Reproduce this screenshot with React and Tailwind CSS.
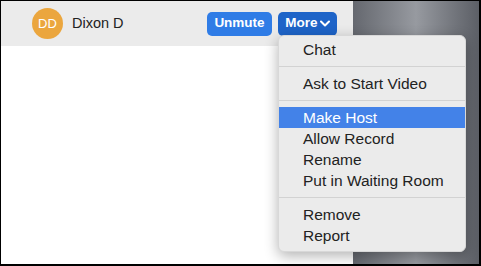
import React from 'react'

const items = [
  ['Chat'],
  ['Ask to Start Video'],
  ['Make Host', 'Allow Record', 'Rename', 'Put in Waiting Room'],
  ['Remove', 'Report'],
]

export default function App() {
  return (
    <div className="relative w-[481px] h-[266px] overflow-hidden border-t border-l border-r-2 border-b-2 border-black bg-white font-['Liberation_Sans',Arial,sans-serif]">
      <div className="flex h-full">
        {/* participant panel */}
        <div className="w-[352px] h-full bg-white">
          <div className="h-[45px] bg-[#ebebeb] flex items-center pl-[31px] pr-[16px]">
            <div className="w-[31px] h-[31px] rounded-full bg-[#eba63e] flex items-center justify-center text-white text-[13px]">
              DD
            </div>
            <span className="ml-[9px] text-[14.5px] text-[#222]">Dixon D</span>
            <div className="ml-auto flex gap-[6px]">
              <button className="w-[65px] h-[24px] rounded-[5px] bg-[#2f7ce6] text-white text-[13.5px] font-semibold">
                Unmute
              </button>
              <button className="w-[59px] h-[24px] rounded-[5px] bg-[#1e64c8] text-white text-[13.5px] font-semibold flex items-center justify-center gap-[2px]">
                More
                <svg width="10" height="7" viewBox="0 0 10 7">
                  <polyline points="1,1.5 5,5.5 9,1.5" fill="none" stroke="white" strokeWidth="2" strokeLinecap="round" strokeLinejoin="round" />
                </svg>
              </button>
            </div>
          </div>
        </div>
        {/* window behind */}
        <div className="flex-1 h-full bg-gradient-to-r from-[#65686f] via-[#979aa0] to-[#5c5f66]" />
      </div>

      {/* dropdown menu */}
      <div className="absolute left-[277px] top-[34px] w-[188px] pt-[3px] pb-[5px] rounded-[6px] bg-[#ebebeb] shadow-[0_4px_14px_rgba(0,0,0,0.3)] border border-[#d8d8d8] text-[15.5px] text-[#222]">
        {items.map((group, gi) => (
          <div key={gi}>
            {gi > 0 && (
              <div className="h-[13px] flex items-center">
                <div className="w-full h-px bg-[#d2d2d2]" />
              </div>
            )}
            {group.map((label) => (
              <div
                key={label}
                className={
                  label === 'Make Host'
                    ? 'h-[21px] pl-[24px] flex items-center bg-[#4382e8] text-white'
                    : 'h-[21px] pl-[24px] flex items-center'
                }
              >
                {label}
              </div>
            ))}
          </div>
        ))}
      </div>
    </div>
  )
}
